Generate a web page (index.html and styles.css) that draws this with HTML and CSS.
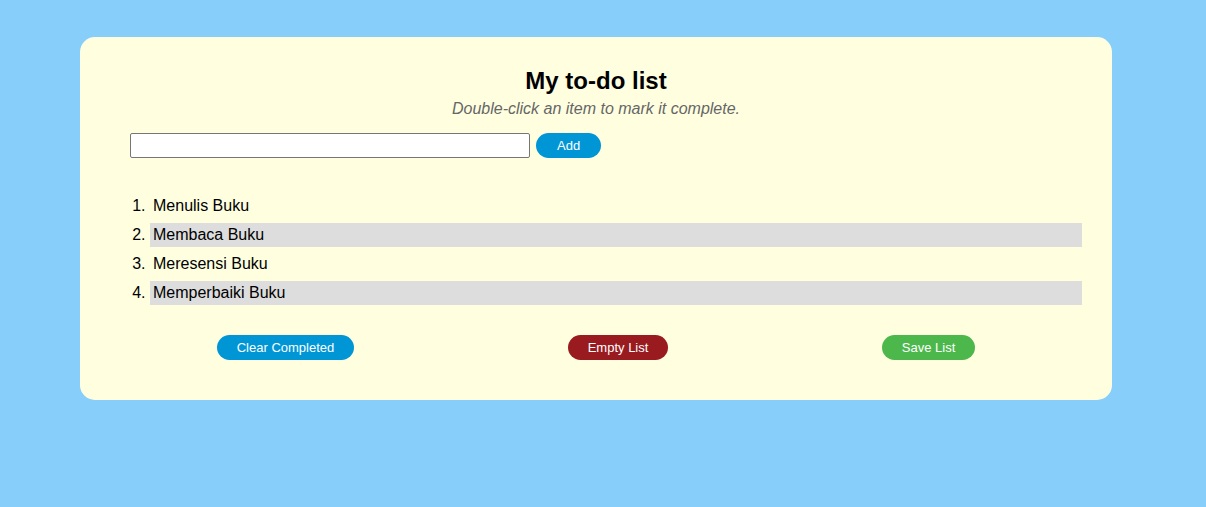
FILE: index.html
```html
<!DOCTYPE html>
<html>
<head>
<meta charset="utf-8">
<link rel="stylesheet" href="styles.css">
</head>
<body>
<div class="card">
  <h1 class="title">My to-do list</h1>
  <p class="hint">Double-click an item to mark it complete.</p>
  <div class="entry">
    <input class="entry-input" type="text">
    <button class="btn btn-blue btn-add">Add</button>
  </div>
  <ol class="todo">
    <li class="todo-item">Menulis Buku</li>
    <li class="todo-item alt">Membaca Buku</li>
    <li class="todo-item">Meresensi Buku</li>
    <li class="todo-item alt">Memperbaiki Buku</li>
  </ol>
  <div class="actions">
    <button class="btn btn-blue">Clear Completed</button>
    <button class="btn btn-red">Empty List</button>
    <button class="btn btn-green">Save List</button>
  </div>
</div>
</body>
</html>
```
FILE: styles.css
```css
html, body {
  margin: 0;
  padding: 0;
}
body {
  background: #87cefa;
  font-family: "Liberation Sans", Arial, sans-serif;
  height: 507px;
}
.card {
  box-sizing: border-box;
  width: 1032px;
  height: 363px;
  margin: 37px 0 0 80px;
  padding: 30px;
  background: #ffffe0;
  border-radius: 15px;
}
.title {
  margin: 0;
  text-align: center;
  font-size: 24px;
  line-height: 28px;
  font-weight: bold;
  color: #000;
}
.hint {
  margin: 5px 0 0;
  text-align: center;
  font-style: italic;
  font-size: 16px;
  line-height: 18px;
  color: #666;
}
.entry {
  display: flex;
  align-items: center;
  gap: 6px;
  margin: 15px 0 0 20px;
}
.entry-input {
  box-sizing: border-box;
  width: 400px;
  height: 25px;
  margin: 0;
  border: 1px solid #767676;
  border-radius: 2px;
  background: #fff;
}
.btn {
  height: 25px;
  padding: 0 20px;
  border: none;
  border-radius: 13px;
  color: #fff;
  font-family: "Liberation Sans", Arial, sans-serif;
  font-size: 13px;
  line-height: 25px;
}
.btn-add {
  padding: 0 21px;
}
.btn-blue { background: #0096d6; }
.btn-red { background: #991b20; }
.btn-green { background: #4cb84c; }
.todo {
  margin: 36px 0 0;
  padding: 0 0 0 40px;
  font-size: 16px;
}
.todo-item {
  height: 24px;
  line-height: 24px;
  padding-left: 3px;
  margin-bottom: 5px;
  color: #000;
}
.todo-item.alt {
  background: #dddddd;
}
.actions {
  display: flex;
  justify-content: space-around;
  margin-top: 30px;
}
```
